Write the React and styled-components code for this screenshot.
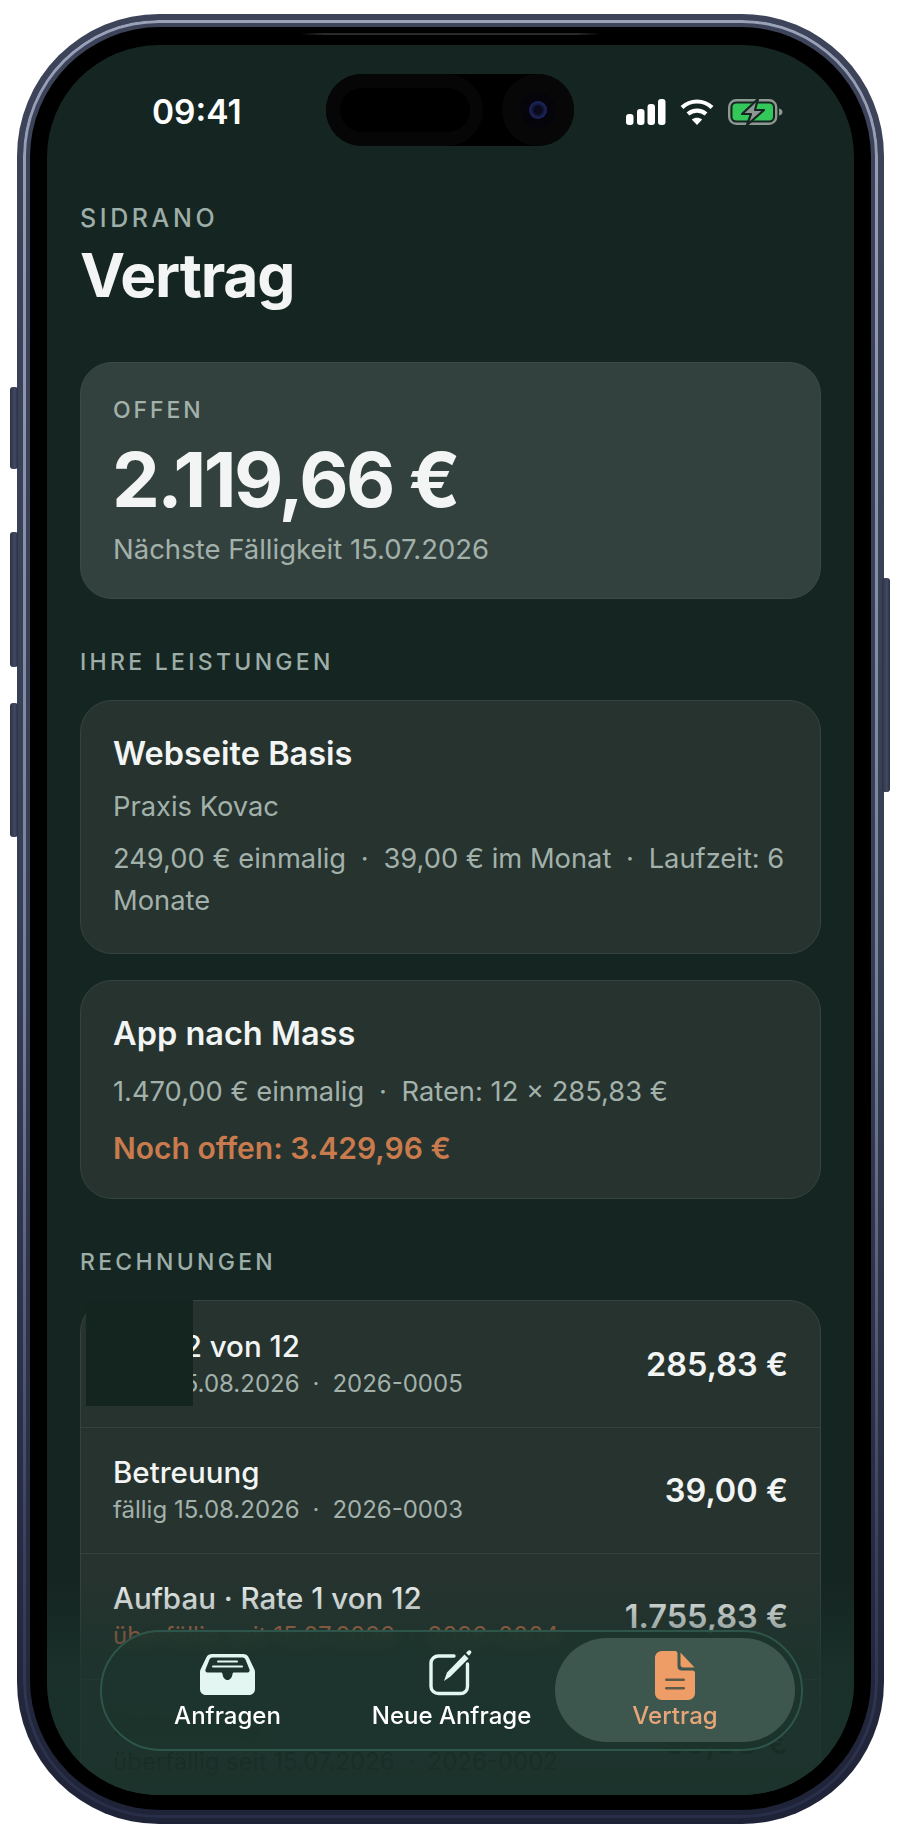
import React from 'react';
import styled, { createGlobalStyle } from 'styled-components';

const GlobalStyle = createGlobalStyle`
  html, body {
    margin: 0;
    padding: 0;
    background: #ffffff;
  }

  * {
    box-sizing: border-box;
  }

  body {
    font-family: Inter, "Noto Sans", sans-serif;
    -webkit-font-smoothing: antialiased;
  }
`;

const StyledPage = styled.div`
  width: 900px;
  height: 1840px;
  padding: 14px 0 0 17px;
  overflow: hidden;
`;

const StyledPhone = styled.div`
  position: relative;
  width: 867px;
  height: 1810px;
  padding: 13px 13px 14px 13px;
  border-radius: 142px;
  background: linear-gradient(180deg, #3d4459 0%, #373f55 50%, #1f2338 100%);

  &::before {
    content: '';
    position: absolute;
    inset: 6px;
    padding: 3px;
    border-radius: 136px;
    background: linear-gradient(180deg, #9aa2ba 0%, #767f99 55%, #3a415c 85%, #282d48 100%);
    mask: linear-gradient(#000 0 0) content-box exclude, linear-gradient(#000 0 0);
  }
`;

const StyledSideButton = styled.span`
  position: absolute;
  top: ${({ $top }) => $top}px;
  ${({ $right }) => ($right ? 'right: -6px;' : 'left: -7px;')}
  width: 8px;
  height: ${({ $height }) => $height}px;
  border-radius: 3px;
  background: linear-gradient(90deg, #2c3245, #424a62 60%, #2a2f44);
`;

const StyledBezel = styled.div`
  position: relative;
  width: 100%;
  height: 100%;
  padding: 18px 17px 15px 17px;
  border-radius: 130px;
  background: #000000;
`;

const StyledEarpiece = styled.span`
  position: absolute;
  top: 6px;
  left: 270px;
  width: 301px;
  height: 2px;
  background: linear-gradient(90deg, #000000, #2a2a28 8%, #2a2a28 92%, #000000);
`;

const StyledScreen = styled.div`
  position: relative;
  width: 100%;
  height: 100%;
  padding: 0 33px 0 33px;
  border-radius: 112px;
  overflow: hidden;
  background: #152522;
  color: #f2f5f3;
`;

const StyledStatusBar = styled.div`
  height: 133px;
  margin: 0 -33px;
  padding: 0 71px 0 105px;
  display: flex;
  justify-content: space-between;
  align-items: center;
`;

const StyledTime = styled.span`
  font-size: 33.5px;
  font-weight: 600;
  color: #ffffff;
`;

const StyledStatusIcons = styled.div`
  display: flex;
  align-items: center;
  gap: 14px;

  & svg {
    display: block;
  }
`;

const StyledIsland = styled.div`
  position: absolute;
  top: 29px;
  left: 279px;
  width: 248px;
  height: 72px;
  border-radius: 36px;
  background: #000000;
`;

const StyledIslandPill = styled.span`
  position: absolute;
  top: 0;
  left: 0;
  width: 157px;
  height: 72px;
  border-radius: 36px;
  background: #060606;

  &::after {
    content: '';
    position: absolute;
    top: 14px;
    left: 14px;
    width: 130px;
    height: 44px;
    border-radius: 22px;
    background: #000000;
  }
`;

const StyledCamera = styled.span`
  position: absolute;
  top: 0;
  right: 0;
  width: 72px;
  height: 72px;
  border-radius: 50%;
  background: radial-gradient(circle, #04040a 0 34%, #070707 36% 100%);

  &::after {
    content: '';
    position: absolute;
    top: 27px;
    left: 27px;
    width: 18px;
    height: 18px;
    border-radius: 50%;
    background: radial-gradient(circle, #0a0a1c 0 30%, #16224e 55%, #2a1f70 85%, #0b0b16 100%);
  }
`;

const StyledEyebrow = styled.div`
  margin-top: 26px;
  font-size: 25px;
  line-height: 28px;
  font-weight: 500;
  letter-spacing: 3.6px;
  color: #9dada7;
`;

const StyledTitle = styled.h1`
  margin: 8px 0 52px;
  font-size: 60.5px;
  line-height: 70px;
  font-weight: 700;
  letter-spacing: -1.2px;
`;

const StyledCard = styled.section`
  margin-bottom: ${({ $gap }) => $gap || 0}px;
  padding: 33px 30px ${({ $bottom }) => $bottom}px 32px;
  border: 1px solid ${({ $strong }) => ($strong ? '#3a4a46' : '#35443f')};
  border-radius: 32px;
  background: ${({ $strong }) => ($strong ? '#33413e' : '#26332f')};
`;

const StyledCardLabel = styled.div`
  font-size: 23px;
  line-height: 28px;
  font-weight: 500;
  letter-spacing: 2.9px;
  color: #a3b1ab;
`;

const StyledAmount = styled.div`
  margin: 13px 0 0 -1px;
  font-size: 76px;
  line-height: 84px;
  font-weight: 700;
  letter-spacing: -2.5px;
`;

const StyledHint = styled.div`
  margin-top: 10px;
  font-size: 27.5px;
  line-height: 36px;
  color: #a3b1ab;
`;

const StyledSection = styled.h2`
  margin: 49px 0 24px;
  font-size: 23px;
  line-height: 28px;
  font-weight: 500;
  letter-spacing: 3.3px;
  color: #9dada7;
`;

const StyledCardTitle = styled.h3`
  margin: 0;
  font-size: 32.5px;
  line-height: 40px;
  font-weight: 600;
`;

const StyledText = styled.p`
  margin: ${({ $top }) => $top}px 0 0;
  font-size: 27.3px;
  line-height: 42px;
  color: #a3b1ab;
`;

const StyledClient = styled(StyledText)`
  line-height: 36px;
`;

const StyledOpen = styled.p`
  margin: 14px 0 0;
  font-size: 30px;
  line-height: 42px;
  font-weight: 600;
  color: #c97b4e;
`;

const StyledDot = styled.span`
  margin: 0 0.54em;
`;

const StyledListWrap = styled.div`
  position: relative;
`;

const StyledList = styled.div`
  border: 1px solid #35443f;
  border-radius: 32px;
  overflow: hidden;
  background: #26332f;
`;

const StyledPatch = styled.span`
  position: absolute;
  top: 0;
  left: 6px;
  width: 107px;
  height: 106px;
  background: #14251f;
`;

const StyledRow = styled.div`
  height: 126px;
  padding: 0 32px 0 32px;
  display: flex;
  justify-content: space-between;
  align-items: center;
  border-top: ${({ $first }) => ($first ? 'none' : '1px solid #33423e')};
  color: ${({ $faded }) => ($faded ? '#14100a' : '#f2f5f3')};
`;

const StyledRowName = styled.div`
  font-size: 29.5px;
  line-height: 36px;
  font-weight: 500;
`;

const StyledRowSub = styled.div`
  margin-top: 3px;
  font-size: 24px;
  line-height: 34px;
  color: ${({ $tone }) => $tone};
`;

const StyledRowAmount = styled.div`
  font-size: 32.5px;
  font-weight: 600;
`;

const StyledFade = styled.div`
  position: absolute;
  left: 0;
  right: 0;
  bottom: 0;
  height: 215px;
  background: linear-gradient(180deg, rgba(27, 51, 44, 0) 0%, rgba(27, 51, 44, 0.72) 40%, rgba(27, 51, 44, 0.8) 82%, #1b332c 100%);
  pointer-events: none;
`;

const StyledTabBar = styled.nav`
  position: absolute;
  left: 53px;
  bottom: 44px;
  width: 703px;
  height: 121px;
  padding: 6px 6px 7px 5px;
  display: grid;
  grid-template-columns: 241px 207px 240px;
  border: 2px solid #2e5549;
  border-radius: 61px;
  background: rgba(28, 52, 45, 0.78);
  backdrop-filter: blur(6px);
`;

const StyledTab = styled.div`
  display: flex;
  flex-direction: column;
  align-items: center;
  justify-content: flex-end;
  padding-bottom: 11px;
  border-radius: 54px;
  font-size: 24px;
  line-height: 30px;
  font-weight: 500;
  color: ${({ $active }) => ($active ? '#e8a678' : '#ffffff')};
  background: ${({ $active }) => ($active ? '#3d574f' : 'transparent')};
`;

const StyledTabIcon = styled.span`
  display: block;
  margin-bottom: ${({ $lift }) => $lift}px;

  & svg {
    display: block;
  }
`;

const SignalIcon = () => (
  <svg width="40" height="26" viewBox="0 0 40 26" fill="#ffffff">
    <rect x="0" y="15" width="7.500" height="11" rx="3" />
    <rect x="11" y="10" width="7.500" height="16" rx="3" />
    <rect x="21.500" y="5" width="7.500" height="21" rx="3" />
    <rect x="32" y="0" width="7.500" height="26" rx="3" />
  </svg>
);

const WifiIcon = () => (
  <svg width="34" height="26" viewBox="0 0 34 26" fill="none" stroke="#ffffff" strokeWidth="4.2">
    <path d="M2 8.5C10.5 0.5 23.5 0.5 32 8.5" />
    <path d="M8 15C13 10.5 21 10.5 26 15" />
    <path d="M17 26L11.8 20.6C14.8 18 19.2 18 22.2 20.6Z" fill="#ffffff" stroke="none" />
  </svg>
);

const BatteryIcon = () => (
  <svg width="55" height="26" viewBox="0 0 55 26">
    <rect x="1.2" y="1.2" width="47" height="23.6" rx="7" fill="#152522" stroke="#8d9893" strokeWidth="2.4" />
    <rect x="4.5" y="4.5" width="40.5" height="17" rx="4" fill="#34c759" />
    <path d="M51 9.5C53.5 10 54.5 11.5 54.5 13S53.5 16 51 16.5Z" fill="#8d9893" />
    <path d="M30 0L14 15H23L19 26L36 11H27Z" fill="#8d9893" stroke="#152522" strokeWidth="2.2" strokeLinejoin="round" />
  </svg>
);

const InboxIcon = () => (
  <svg width="55" height="41" viewBox="0 0 55 41">
    <path
      fill="#e4f6f1"
      fillRule="evenodd"
      d="M12 0H43C45.500 0 47.500 1.200 48.600 3.200L54 14.500C54.700 15.800 55 16.800 55 18.500V35C55 38.500 52.500 41 49 41H6C2.500 41 0 38.500 0 35V18.500C0 16.800 .3 15.800 1 14.500L6.400 3.200C7.500 1.200 9.500 0 12 0ZM12.500 3.500C11 3.500 10.200 4.200 9.500 5.500L5.500 15.500C5 17 5.800 18.500 7.500 18.500H21C22 18.500 22.300 19.200 22.500 20C23 23.500 24.800 26 27.500 26S32 23.500 32.500 20C32.700 19.200 33 18.500 34 18.500H47.500C49.200 18.500 50 17 49.500 15.500L45.500 5.500C44.800 4.200 44 3.500 42.500 3.500Z"
    />
    <rect x="17" y="6.500" width="21" height="2" rx="1" fill="#e4f6f1" />
    <rect x="12" y="11.500" width="31" height="2" rx="1" fill="#e4f6f1" />
  </svg>
);

const ComposeIcon = () => (
  <svg width="45" height="46" viewBox="0 0 45 46">
    <path
      d="M25 6H9.500C5.500 6 2 9 2 13V36.500C2 40.500 5.500 43.500 9.500 43.500H31.500C35.500 43.500 38.500 40.500 38.500 36.500V14"
      fill="none"
      stroke="#e4f6f1"
      strokeWidth="3.400"
      strokeLinecap="round"
    />
    <path d="M15 31L18 22.500L35.500 4.500L39.500 8.500L21.500 26.500Z" fill="#e4f6f1" />
    <path d="M37 3L39 .8C39.800 0 41 0 41.800 .8C42.600 1.600 42.600 2.800 41.800 3.600L40 5.800Z" fill="#e4f6f1" />
  </svg>
);

const DocumentIcon = () => (
  <svg width="40" height="49" viewBox="0 0 40 49">
    <path
      fill="#ee9d66"
      d="M7 0H20C21.500 0 22.500 1 22.500 2.500V15C22.500 18 24 19.500 27 19.500H37.500C39 19.500 40 20.500 40 22V42C40 46 37 49 33 49H7C3 49 0 46 0 42V7C0 3 3 0 7 0Z"
    />
    <path fill="#ee9d66" d="M25.500 1.500L39.500 16.500H28.500C26.500 16.500 25.500 15.500 25.500 13.500Z" />
    <rect x="10" y="27.500" width="20" height="2.600" rx="1.300" fill="#5e5a4a" />
    <rect x="10" y="36" width="20" height="2.600" rx="1.300" fill="#5e5a4a" />
  </svg>
);

const invoices = [
  { name: 'Rate 2 von 12', date: 'fällig 15.08.2026', number: '2026-0005', amount: '285,83 €', tone: '#a3b1ab' },
  { name: 'Betreuung', date: 'fällig 15.08.2026', number: '2026-0003', amount: '39,00 €', tone: '#a3b1ab' },
  { name: 'Aufbau · Rate 1 von 12', date: 'überfällig seit 15.07.2026', number: '2026-0004', amount: '1.755,83 €', tone: '#c5714d' },
  { name: 'Betreuung', date: 'überfällig seit 15.07.2026', number: '2026-0002', amount: '39,00 €', tone: '#14100a', faded: true },
];

const App = () => (
  <StyledPage>
    <GlobalStyle />
    <StyledPhone>
      <StyledSideButton $top={373} $height={82} />
      <StyledSideButton $top={518} $height={135} />
      <StyledSideButton $top={689} $height={134} />
      <StyledSideButton $right $top={564} $height={214} />
      <StyledBezel>
        <StyledEarpiece />
        <StyledScreen>
          <StyledStatusBar>
            <StyledTime>09:41</StyledTime>
            <StyledStatusIcons>
              <SignalIcon />
              <WifiIcon />
              <BatteryIcon />
            </StyledStatusIcons>
          </StyledStatusBar>
          <StyledIsland>
            <StyledIslandPill />
            <StyledCamera />
          </StyledIsland>

          <StyledEyebrow>SIDRANO</StyledEyebrow>
          <StyledTitle>Vertrag</StyledTitle>

          <StyledCard $strong $bottom={31}>
            <StyledCardLabel>OFFEN</StyledCardLabel>
            <StyledAmount>2.119,66 €</StyledAmount>
            <StyledHint>Nächste Fälligkeit 15.07.2026</StyledHint>
          </StyledCard>

          <StyledSection>IHRE LEISTUNGEN</StyledSection>
          <StyledCard $gap={26} $bottom={31}>
            <StyledCardTitle>Webseite Basis</StyledCardTitle>
            <StyledClient $top={15}>Praxis Kovac</StyledClient>
            <StyledText $top={13}>
              249,00 € einmalig<StyledDot>·</StyledDot>39,00 € im Monat<StyledDot>·</StyledDot>Laufzeit: 6 Monate
            </StyledText>
          </StyledCard>
          <StyledCard $bottom={29}>
            <StyledCardTitle>App nach Mass</StyledCardTitle>
            <StyledText $top={17}>
              1.470,00 € einmalig<StyledDot>·</StyledDot>Raten: 12 × 285,83 €
            </StyledText>
            <StyledOpen>Noch offen: 3.429,96 €</StyledOpen>
          </StyledCard>

          <StyledSection>RECHNUNGEN</StyledSection>
          <StyledListWrap>
            <StyledList>
              {invoices.map((invoice, index) => (
                <StyledRow key={invoice.number} $first={index === 0} $faded={invoice.faded}>
                  <div>
                    <StyledRowName>{invoice.name}</StyledRowName>
                    <StyledRowSub $tone={invoice.tone}>
                      {invoice.date}
                      <StyledDot>·</StyledDot>
                      {invoice.number}
                    </StyledRowSub>
                  </div>
                  <StyledRowAmount>{invoice.amount}</StyledRowAmount>
                </StyledRow>
              ))}
            </StyledList>
            <StyledPatch />
          </StyledListWrap>

          <StyledFade />
          <StyledTabBar>
            <StyledTab>
              <StyledTabIcon $lift={6}>
                <InboxIcon />
              </StyledTabIcon>
              Anfragen
            </StyledTab>
            <StyledTab>
              <StyledTabIcon $lift={5}>
                <ComposeIcon />
              </StyledTabIcon>
              Neue Anfrage
            </StyledTab>
            <StyledTab $active>
              <StyledTabIcon $lift={1}>
                <DocumentIcon />
              </StyledTabIcon>
              Vertrag
            </StyledTab>
          </StyledTabBar>
        </StyledScreen>
      </StyledBezel>
    </StyledPhone>
  </StyledPage>
);

export default App;
